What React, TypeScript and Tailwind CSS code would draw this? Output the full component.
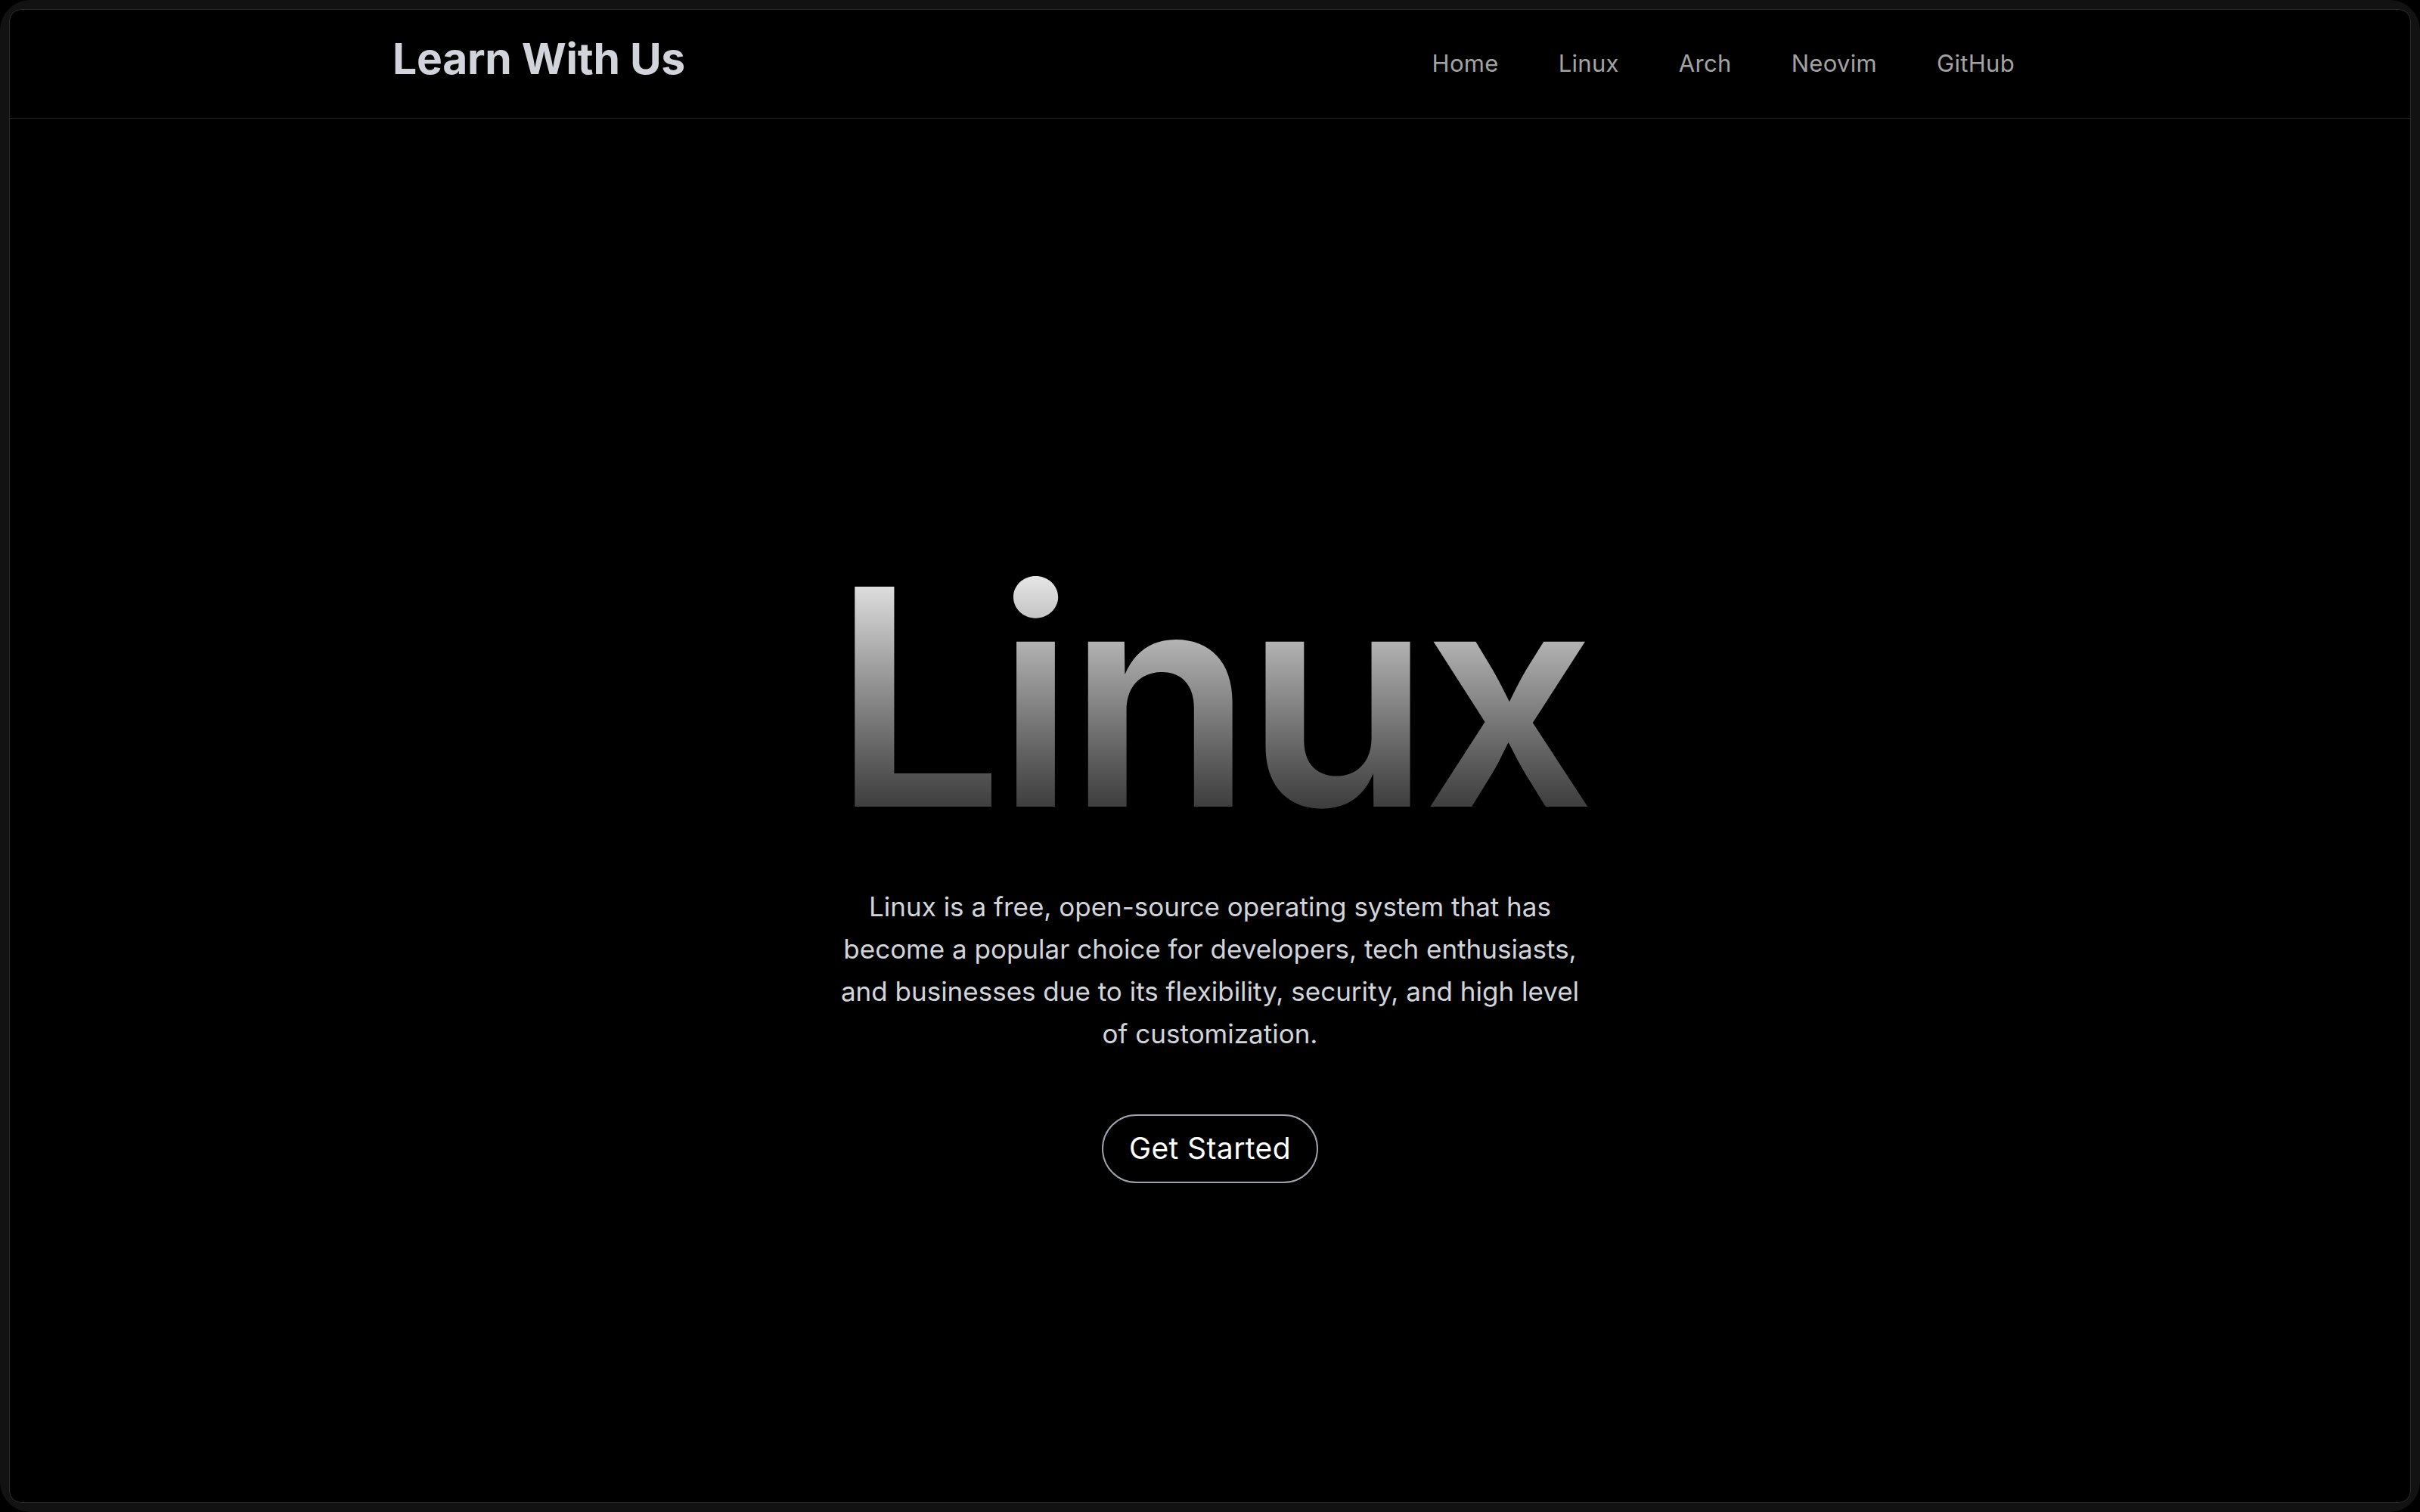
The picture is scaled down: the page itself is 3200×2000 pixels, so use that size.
const links = ['Home', 'Linux', 'Arch', 'Neovim', 'GitHub']

function Header() {
  return (
    <header className="flex h-[144px] shrink-0 items-center justify-between border-b border-[#222222] pl-[506px] pr-[523px]">
      <a className="pb-[14px] text-[57px] font-bold tracking-[-0.005em] text-[#d1d4db]">Learn With Us</a>
      <nav className="flex items-center gap-[79px]">
        {links.map(link => (
          <a key={link} className="text-[31px] tracking-[0.01em] text-[#a3a3a3]">
            {link}
          </a>
        ))}
      </nav>
    </header>
  )
}

function Hero() {
  return (
    <main className="flex flex-col items-center pt-[564px]">
      <h1 className="bg-gradient-to-b from-white to-[#252525] bg-clip-text text-[400px] leading-none font-semibold tracking-[-0.025em] text-transparent">
        Linux
      </h1>
      <p className="mt-[50px] w-[1004px] text-center text-[35px] leading-[56px] text-[#d1d5db]">
        Linux is a free, open-source operating system that has become a popular choice for
        developers, tech enthusiasts, and businesses due to its flexibility, security, and high
        level of customization.
      </p>
      <button className="mt-[79px] flex h-[91px] items-center rounded-full border-2 border-[#9ea2ad] px-[34px] text-[39px] tracking-[0.01em] text-white">
        Get Started
      </button>
    </main>
  )
}

export default function App() {
  return (
    <div className="h-screen bg-black font-['Inter','Noto_Sans',sans-serif]">
      <div className="h-full rounded-[40px] bg-[#121212] p-3">
        <div className="flex h-full flex-col overflow-hidden rounded-[16px] border border-[#2b2b2b] bg-black">
          <Header />
          <Hero />
        </div>
      </div>
    </div>
  )
}
